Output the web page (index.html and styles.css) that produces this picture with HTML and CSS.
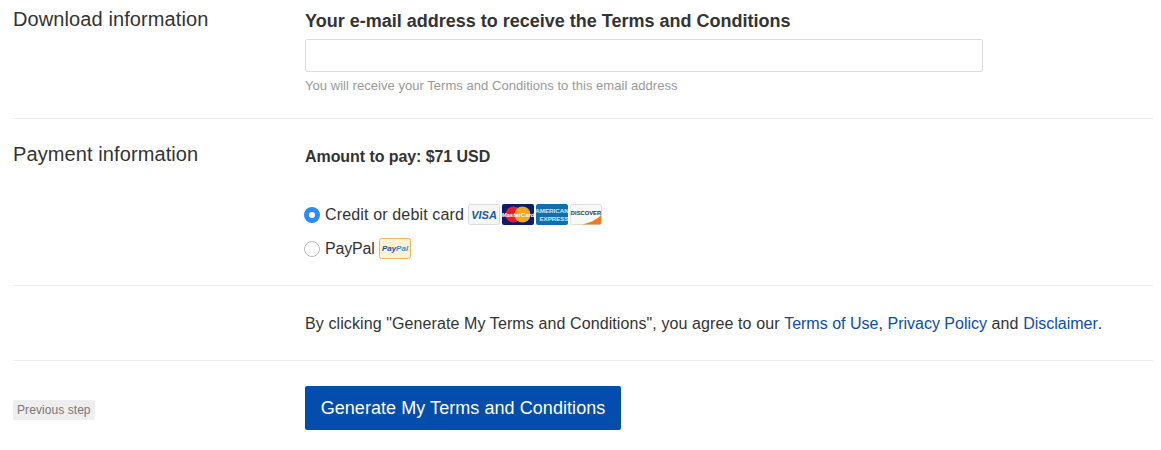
FILE: index.html
```html
<!DOCTYPE html>
<html lang="en">

<head>
    <meta charset="UTF-8">
    <title>Generate Terms and Conditions</title>
    <link rel="stylesheet" href="styles.css">
</head>

<body>
    <form class="wizard">
        <div class="row row-download">
            <div class="row-label">Download information</div>
            <div class="row-body">
                <label class="field-label" for="email">Your e-mail address to receive the Terms and Conditions</label>
                <input class="field-input" type="text" id="email">
                <p class="field-help">You will receive your Terms and Conditions to this email address</p>
            </div>
        </div>

        <div class="row row-payment">
            <div class="row-label">Payment information</div>
            <div class="row-body">
                <p class="amount">Amount to pay: $71 USD</p>
                <div class="pay-option pay-option-first">
                    <span class="radio radio-on"></span>
                    <span class="pay-name">Credit or debit card</span>
                    <span class="cards">
                        <svg class="card" viewBox="0 0 32 21">
                            <rect x=".5" y=".5" width="31" height="20" rx="2" fill="#f6f6f6" stroke="#dcdcdc" />
                            <text x="16" y="14.5" text-anchor="middle" font-size="11" font-weight="700" font-style="italic" fill="#1a5a9c" font-family="Liberation Sans">VISA</text>
                        </svg>
                        <svg class="card" viewBox="0 0 32 21">
                            <rect width="32" height="21" rx="2" fill="#0d1c66" />
                            <circle cx="11.5" cy="10.5" r="8" fill="#e2202c" />
                            <circle cx="20.5" cy="10.5" r="8" fill="#f5a623" />
                            <text x="16" y="12.5" text-anchor="middle" font-size="6" font-weight="700" font-style="italic" fill="#fff" font-family="Liberation Sans">MasterCard</text>
                        </svg>
                        <svg class="card" viewBox="0 0 32 21">
                            <rect width="32" height="21" rx="2" fill="#0f6fb0" />
                            <text x="16" y="9" text-anchor="middle" font-size="6.2" font-weight="700" fill="#d6ebf7" font-family="Liberation Sans">AMERICAN</text>
                            <text x="18" y="16.5" text-anchor="middle" font-size="6.2" font-weight="700" fill="#d6ebf7" font-family="Liberation Sans">EXPRESS</text>
                        </svg>
                        <svg class="card" viewBox="0 0 32 21">
                            <rect x=".5" y=".5" width="31" height="20" rx="2" fill="#f8f8f8" stroke="#e0e0e0" />
                            <path d="M31 11v8a1.5 1.5 0 0 1-1.5 1.5H12C20 19 27 15.5 31 11z" fill="#f47a1f" />
                            <text x="16" y="11" text-anchor="middle" font-size="5.8" font-weight="700" fill="#333" font-family="Liberation Sans">DISCOVER</text>
                        </svg>
                    </span>
                </div>
                <div class="pay-option">
                    <span class="radio"></span>
                    <span class="pay-name pay-name-paypal">PayPal</span>
                    <svg class="card" viewBox="0 0 32 21">
                        <rect x=".5" y=".5" width="31" height="20" rx="2" fill="#fdf1d6" stroke="#f5b55f" />
                        <text x="16" y="13" text-anchor="middle" font-size="8" font-weight="700" font-style="italic" fill="#1f4f96" font-family="Liberation Sans">Pay<tspan fill="#2f8fd0">Pal</tspan></text>
                    </svg>
                </div>
            </div>
        </div>

        <div class="row row-terms">
            <div class="row-label"></div>
            <div class="row-body">
                By clicking "Generate My Terms and Conditions", you agree to our <a href="#">Terms of Use</a>, <a href="#">Privacy Policy</a> and <a href="#">Disclaimer</a>.
            </div>
        </div>

        <div class="row row-submit">
            <div class="row-label"><a class="prev-step" href="#">Previous step</a></div>
            <div class="row-body">
                <button class="submit" type="button">Generate My Terms and Conditions</button>
            </div>
        </div>
    </form>
</body>

</html>
```

FILE: styles.css
```css
body {
    margin: 0;
    font-family: 'Liberation Sans', Arial, sans-serif;
    font-size: 16px;
    color: #333;
    background-color: #fff;
}

.wizard {
    width: 1140px;
    margin-left: 13px;
}

.row {
    display: flex;
    border-bottom: 1px solid #eee;
}

.row:last-child {
    border-bottom: none;
}

.row-label {
    width: 292px;
    flex-shrink: 0;
    font-size: 20px;
    letter-spacing: 0.1px;
    line-height: 24px;
}

.row-body {
    flex: 1;
}

/* Download */
.row-download {
    height: 111px;
    padding-top: 7px;
}

.field-label {
    display: block;
    font-size: 18px;
    font-weight: 700;
    line-height: 24px;
    margin-top: 2px;
}

.field-input {
    display: block;
    box-sizing: border-box;
    width: 678px;
    height: 33px;
    margin-top: 6px;
    border: 1px solid #ddd;
    border-radius: 2px;
}

.field-help {
    margin: 5px 0 0;
    font-size: 13px;
    letter-spacing: 0.04px;
    line-height: 18px;
    color: #999;
}

/* Payment */
.row-payment {
    height: 141px;
    padding-top: 25px;
}

.row-payment .row-label {
    margin-top: -2px;
}

.amount {
    margin: 2px 0 0;
    font-size: 16px;
    letter-spacing: -0.07px;
    font-weight: 700;
    line-height: 22px;
}

.pay-option {
    display: flex;
    align-items: center;
    gap: 4px;
    height: 24px;
    margin-top: 10px;
}

.pay-option-first {
    margin-top: 34px;
}

.pay-name {
    padding-top: 2px;
    letter-spacing: 0.15px;
}

.pay-name-paypal {
    letter-spacing: -0.2px;
}

.radio {
    box-sizing: border-box;
    width: 16px;
    height: 16px;
    margin: 1px 1px 0 -1px;
    border: 1px solid #bbb;
    border-radius: 50%;
    background-color: #fff;
}

.radio-on {
    border: 5px solid #2a8cf4;
}

.cards {
    display: flex;
    gap: 2px;
}

.card {
    display: block;
    width: 32px;
    height: 21px;
}

/* Terms */
.row-terms {
    height: 75px;
    padding-top: 2px;
    box-sizing: border-box;
    align-items: center;
    letter-spacing: 0.1px;
}

.row-terms a {
    color: #0b4ea2;
    letter-spacing: 0;
    text-decoration: none;
}

/* Submit */
.row-submit {
    padding-top: 25px;
    height: 64px;
}

.row-submit .row-label {
    padding-top: 14px;
    line-height: 20px;
}

.prev-step {
    display: inline-block;
    padding: 0 4px;
    font-size: 12px;
    letter-spacing: 0.07px;
    line-height: 20px;
    color: #777;
    background-color: #eee;
    border-radius: 2px;
    text-decoration: none;
    vertical-align: top;
}

.submit {
    width: 316px;
    height: 44px;
    padding: 0;
    font-family: inherit;
    font-size: 18px;
    letter-spacing: 0.06px;
    color: #fff;
    background-color: #034dac;
    border: none;
    border-radius: 2px;
    cursor: pointer;
}
```
